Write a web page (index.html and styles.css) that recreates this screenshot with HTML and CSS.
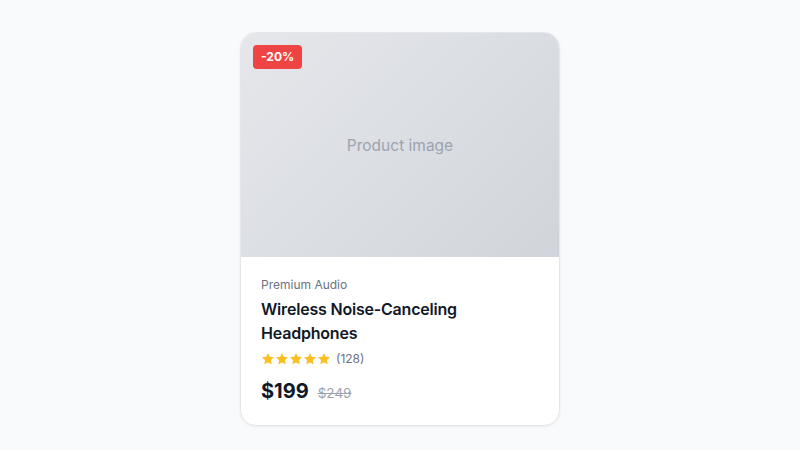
FILE: index.html
```html
<!DOCTYPE html>
<html>
<head>
<meta charset="utf-8">
<link rel="stylesheet" href="styles.css">
</head>
<body>
<div class="card">
  <div class="media">
    <span class="badge">-20%</span>
    <span class="placeholder">Product image</span>
  </div>
  <div class="info">
    <div class="category">Premium Audio</div>
    <div class="title">Wireless Noise-Canceling Headphones</div>
    <div class="rating">
      <span class="stars">
        <svg viewBox="0 0 24 24"><path d="M12 1.8l3.1 6.5 7.1.9-5.2 4.9 1.3 7.1L12 17.8l-6.3 3.4 1.3-7.1-5.2-4.9 7.1-.9z"/></svg>
        <svg viewBox="0 0 24 24"><path d="M12 1.8l3.1 6.5 7.1.9-5.2 4.9 1.3 7.1L12 17.8l-6.3 3.4 1.3-7.1-5.2-4.9 7.1-.9z"/></svg>
        <svg viewBox="0 0 24 24"><path d="M12 1.8l3.1 6.5 7.1.9-5.2 4.9 1.3 7.1L12 17.8l-6.3 3.4 1.3-7.1-5.2-4.9 7.1-.9z"/></svg>
        <svg viewBox="0 0 24 24"><path d="M12 1.8l3.1 6.5 7.1.9-5.2 4.9 1.3 7.1L12 17.8l-6.3 3.4 1.3-7.1-5.2-4.9 7.1-.9z"/></svg>
        <svg viewBox="0 0 24 24"><path d="M12 1.8l3.1 6.5 7.1.9-5.2 4.9 1.3 7.1L12 17.8l-6.3 3.4 1.3-7.1-5.2-4.9 7.1-.9z"/></svg>
      </span>
      <span class="count">(128)</span>
    </div>
    <div class="prices">
      <span class="price">$199</span>
      <span class="old">$249</span>
    </div>
  </div>
</div>
</body>
</html>
```
FILE: styles.css
```css
* { box-sizing: border-box; }
html, body { margin: 0; }
body {
  background: #f9fafb;
  font-family: Inter, "Noto Sans", sans-serif;
  display: flex;
  justify-content: center;
  align-items: flex-start;
  padding-top: 32px;
  height: 450px;
}
.card {
  width: 320px;
  background: #fff;
  border: 1px solid #e5e7eb;
  border-radius: 16px;
  overflow: hidden;
  box-shadow: 0 1px 3px rgba(0,0,0,0.06);
}
.media {
  position: relative;
  height: 224px;
  background: linear-gradient(135deg, #e5e7eb, #d1d5db);
  display: flex;
  align-items: center;
  justify-content: center;
}
.placeholder {
  color: #9ca3af;
  font-size: 15.5px;
}
.badge {
  position: absolute;
  top: 12px;
  left: 12px;
  background: #ef4444;
  color: #fff;
  font-size: 12px;
  font-weight: 700;
  line-height: 24px;
  height: 24px;
  padding: 0 8px;
  border-radius: 4px;
}
.info {
  padding: 18px 20px 20px;
}
.category {
  font-size: 12px;
  line-height: 20px;
  color: #6b7280;
}
.title {
  margin-top: 2px;
  font-size: 16px;
  font-weight: 600;
  letter-spacing: -0.2px;
  line-height: 24px;
  color: #111827;
}
.rating {
  margin-top: 5px;
  display: flex;
  align-items: center;
  gap: 5px;
  height: 18px;
}
.stars {
  display: flex;
  fill: #fbbf24;
}
.stars svg {
  width: 14px;
  height: 14px;
  display: block;
}
.count {
  font-size: 12px;
  line-height: 18px;
  color: #6b7280;
}
.prices {
  margin-top: 9px;
  display: flex;
  align-items: baseline;
  gap: 9px;
  height: 28px;
  line-height: 28px;
}
.price {
  font-size: 20px;
  font-weight: 700;
  color: #111827;
}
.old {
  font-size: 13.5px;
  color: #9ca3af;
  text-decoration: line-through;
}
```
